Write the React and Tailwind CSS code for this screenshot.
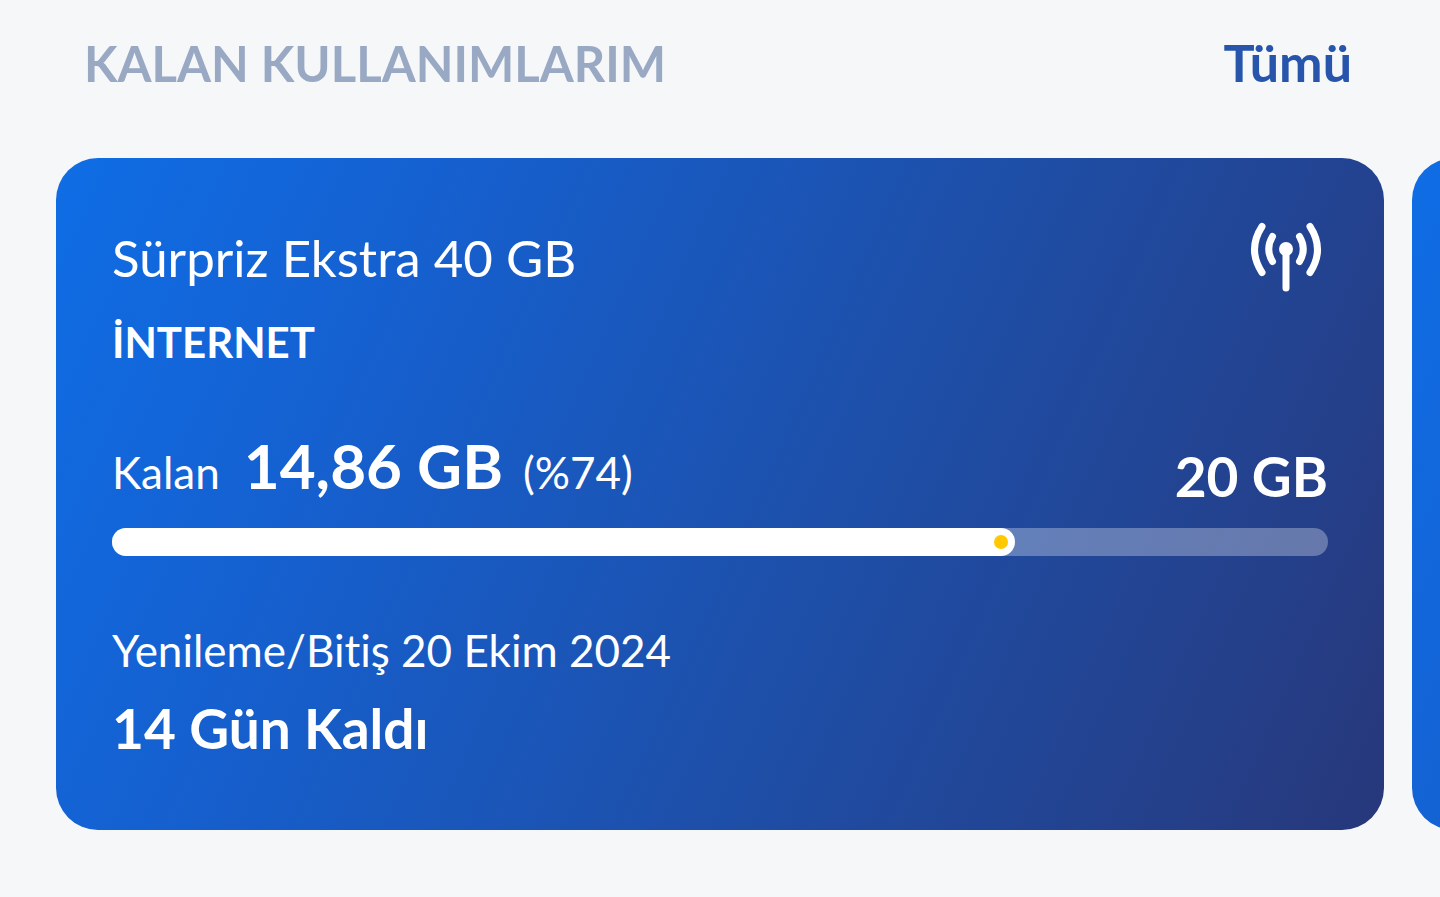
const usage = {
  name: 'Sürpriz Ekstra 40 GB',
  type: 'İNTERNET',
  remaining: '14,86 GB',
  percentLabel: '(%74)',
  percent: 74.3,
  total: '20 GB',
  renewal: 'Yenileme/Bitiş 20 Ekim 2024',
  daysLeft: '14 Gün Kaldı',
};

const cardClass =
  'w-full shrink-0 rounded-[42px] bg-[linear-gradient(114deg,#0f6de5_0%,#1560d0_24%,#1d50ab_56%,#253e87_89%,#27377a_100%)] px-14 pt-16 pb-[70px] text-white';

function AntennaIcon() {
  return (
    <svg
      className="h-[72px] w-[84px] shrink-0"
      viewBox="0 0 84 72"
      fill="none"
      stroke="currentColor"
      strokeWidth="7"
      strokeLinecap="round"
      aria-hidden="true"
    >
      <circle cx="42" cy="27" r="7" fill="currentColor" stroke="none" />
      <path d="M42 27V66" />
      <path d="M55.5 14.5Q63 27 55.5 39.5M28.5 14.5Q21 27 28.5 39.5" />
      <path d="M66 4.5Q81 27.5 66 50.5M18 4.5Q3 27.5 18 50.5" />
    </svg>
  );
}

function UsageCard({ item }) {
  return (
    <article className={cardClass}>
      <div className="flex items-start justify-between">
        <h3 className="text-[51px] leading-[72px]">{item.name}</h3>
        <AntennaIcon />
      </div>
      <p className="mt-4 text-[42px] leading-[64px] font-bold">{item.type}</p>

      <div className="mt-[55px] flex items-end justify-between">
        <p className="flex items-baseline text-[44px] leading-[72px]">
          <span>Kalan</span>
          <strong className="ml-6 text-[62px] font-bold">{item.remaining}</strong>
          <span className="ml-5">{item.percentLabel}</span>
        </p>
        <p className="text-[55px] leading-[64px] font-bold">{item.total}</p>
      </div>

      <div
        className="mt-5 h-7 rounded-full bg-white/30"
        role="progressbar"
        aria-label="Kalan"
        aria-valuemin={0}
        aria-valuemax={100}
        aria-valuenow={item.percent}
      >
        <div
          className="flex h-full items-center justify-end rounded-full bg-white pr-[7px]"
          style={{ width: `${item.percent}%` }}
        >
          <span className="size-3.5 rounded-full bg-[#ffc800]" />
        </div>
      </div>

      <p className="mt-[66px] text-[44px] leading-[56px] [font-variant-ligatures:none]">{item.renewal}</p>
      <p className="mt-[18px] text-[55px] leading-[64px] font-bold">{item.daysLeft}</p>
    </article>
  );
}

export default function App() {
  return (
    <main className="min-h-screen overflow-hidden bg-[#f5f7f9] pt-8 pb-16 font-['Lato','Liberation_Sans',sans-serif]">
      <header className="flex items-baseline justify-between pr-[88px] pl-[84px]">
        <h2 className="text-[49px] leading-[60px] font-bold text-[#99a8c3]">KALAN KULLANIMLARIM</h2>
        <a href="#tumu" className="text-[52px] leading-[60px] font-bold text-[#2855ac]">
          Tümü
        </a>
      </header>
      <section className="mt-[65px] flex gap-7 px-14">
        <UsageCard item={usage} />
        <div className={cardClass} />
      </section>
    </main>
  );
}
